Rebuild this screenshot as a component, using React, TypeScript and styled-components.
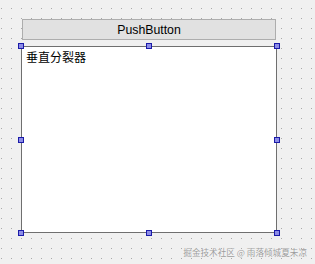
import React from "react";
import styled, { createGlobalStyle } from "styled-components";

const dotSvg = encodeURIComponent(
  '<svg xmlns="http://www.w3.org/2000/svg" width="10" height="10"><rect x="1" y="8" width="1" height="1" fill="#a9a9a9"/></svg>'
);

const GlobalStyle = createGlobalStyle`
  html, body {
    margin: 0;
    padding: 0;
    background: #f0f0f0;
  }
  * { box-sizing: border-box; }
`;

const Canvas = styled.div`
  width: 315px;
  height: 264px;
  overflow: hidden;
  background-color: #f0f0f0;
  background-image: url("data:image/svg+xml,${dotSvg}");
  background-position: 0 0;
  display: flex;
  flex-direction: column;
  align-items: flex-start;
  padding: 19px 0 0 21px;
  font-family: "Liberation Sans", "Noto Sans CJK SC", sans-serif;
`;

const PushButton = styled.button`
  margin: 0 0 0 1px;
  width: 254px;
  height: 21px;
  padding: 0;
  background: #e1e1e1;
  border: 1px solid #adadad;
  border-radius: 0;
  font-family: "Liberation Sans", sans-serif;
  font-size: 12.3px;
  color: #000;
  display: flex;
  align-items: center;
  justify-content: center;
`;

const SplitterFrame = styled.div`
  position: relative;
  margin-top: 6px;
  width: 256px;
  height: 187px;
  background: #ffffff;
  border: 1px solid #6f6f6f;
  padding: 3px 0 0 4px;
`;

const Label = styled.div`
  font-family: "Noto Sans CJK SC", sans-serif;
  font-size: 12px;
  line-height: 14px;
  color: #000;
`;

type HandleProps = { $x: "left" | "mid" | "right"; $y: "top" | "mid" | "bottom" };

const Handle = styled.div<HandleProps>`
  position: absolute;
  width: 6px;
  height: 6px;
  background: #8c8ce6;
  border: 1px solid #1a1aa8;
  ${(p) =>
    p.$x === "left" ? "left: -4px;" : p.$x === "right" ? "right: -4px;" : "left: calc(50% - 3px);"}
  ${(p) =>
    p.$y === "top" ? "top: -4px;" : p.$y === "bottom" ? "bottom: -4px;" : "top: calc(50% - 3px);"}
`;

const Footer = styled.div`
  align-self: stretch;
  display: flex;
  justify-content: flex-end;
  margin-top: 14px;
  padding-right: 8px;
`;

const Watermark = styled.span`
  font-family: "Noto Sans CJK SC", sans-serif;
  font-size: 8.6px;
  line-height: 11px;
  color: #9c9c9c;
  text-shadow: 0 0 1px #ffffff;
  white-space: nowrap;
`;

const handles: HandleProps[] = [
  { $x: "left", $y: "top" },
  { $x: "mid", $y: "top" },
  { $x: "right", $y: "top" },
  { $x: "left", $y: "mid" },
  { $x: "right", $y: "mid" },
  { $x: "left", $y: "bottom" },
  { $x: "mid", $y: "bottom" },
  { $x: "right", $y: "bottom" },
];

export default function App() {
  return (
    <>
      <GlobalStyle />
      <Canvas>
        <PushButton>PushButton</PushButton>
        <SplitterFrame>
          <Label>垂直分裂器</Label>
          {handles.map((h, i) => (
            <Handle key={i} $x={h.$x} $y={h.$y} />
          ))}
        </SplitterFrame>
        <Footer>
          <Watermark>掘金技术社区 @ 雨落倾城夏未凉</Watermark>
        </Footer>
      </Canvas>
    </>
  );
}
